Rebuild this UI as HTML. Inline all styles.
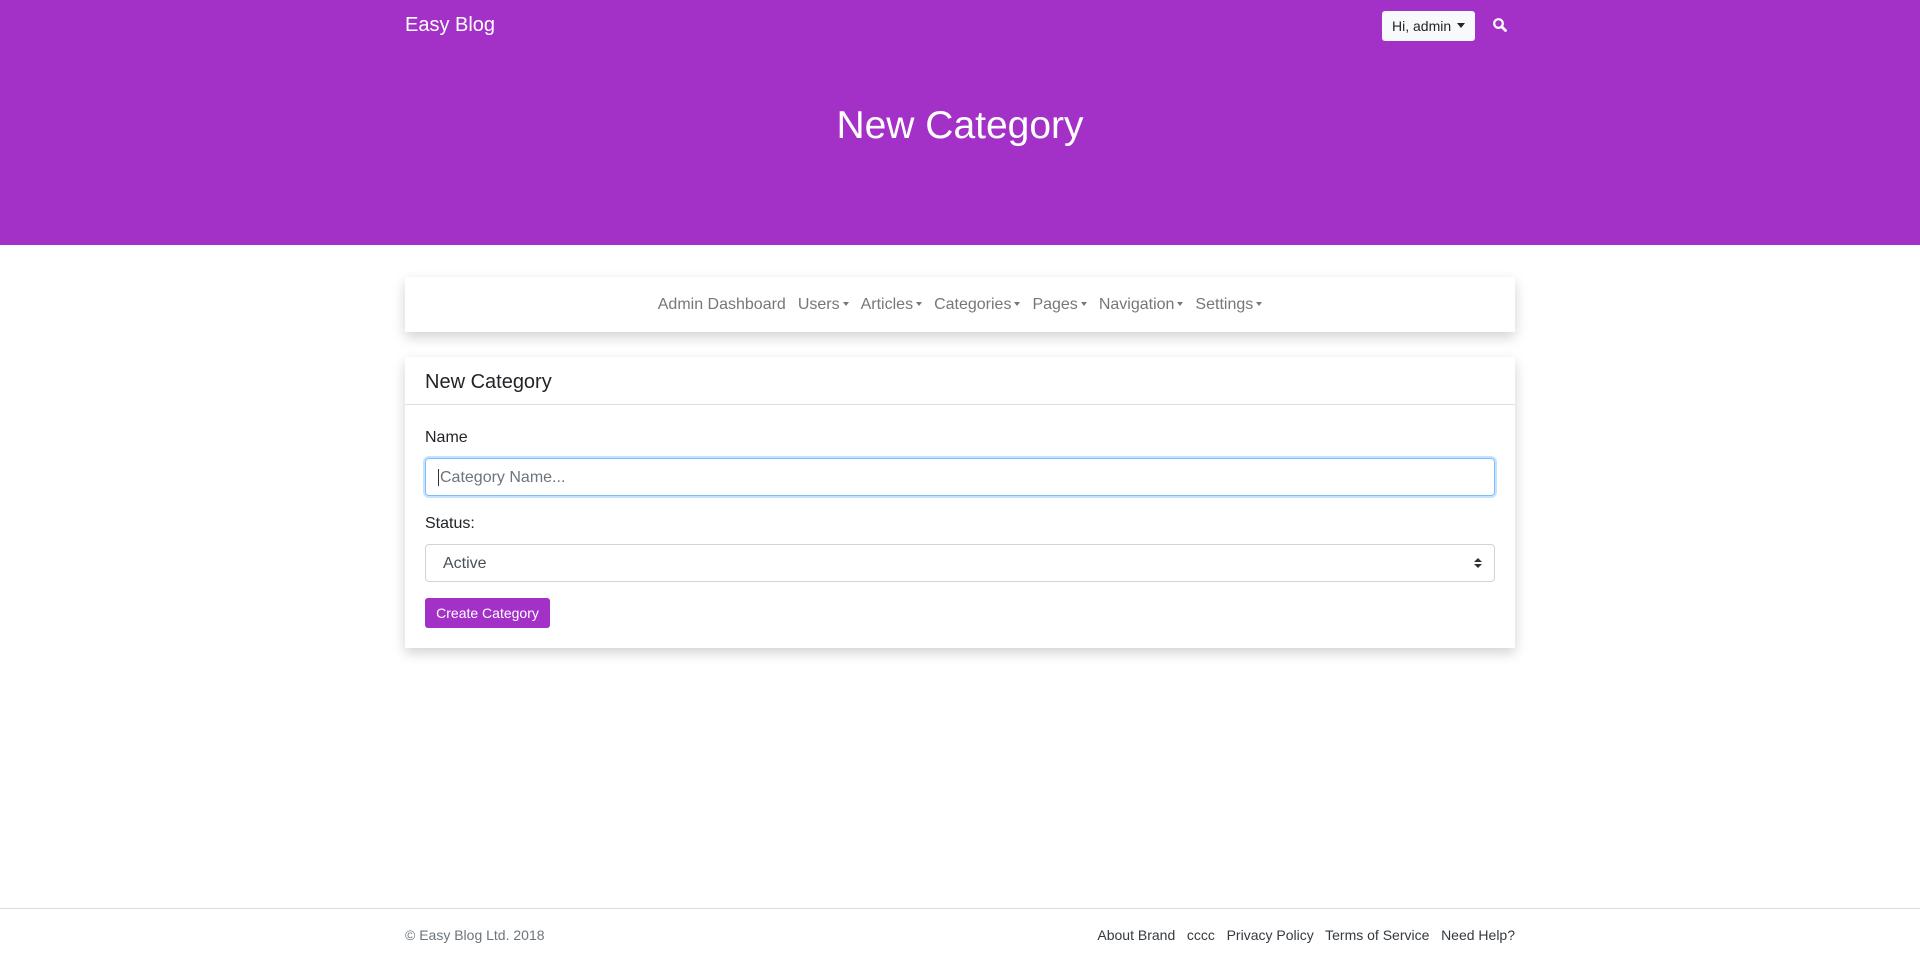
<!DOCTYPE html>
<html><head><meta charset="utf-8"><style>
*{box-sizing:border-box;margin:0;padding:0}
body{width:1920px;height:963px;font-family:"Liberation Sans",sans-serif;background:#fff;color:#212529;position:relative;overflow:hidden}
.hero{position:absolute;left:0;top:0;width:1920px;height:245px;background:#a331c8}
.brand{position:absolute;left:405px;top:14px;font-size:20px;color:#fff}
.hi{position:absolute;left:1382px;top:11px;width:93px;height:30px;background:#f8f9fa;border-radius:3px;font-size:14px;color:#212529;line-height:30px;padding-left:10px}
.hi:after{content:"";position:absolute;right:10px;top:12px;border-left:4px solid transparent;border-right:4px solid transparent;border-top:5px solid #212529}
.search{position:absolute;left:1492px;top:17px}
h1{position:absolute;left:0;width:1920px;top:104px;text-align:center;font-weight:normal;font-size:39px;color:#fff}
.card{position:absolute;left:405px;width:1110px;background:#fff;box-shadow:0 5px 12px rgba(0,0,0,.18)}
.nav{top:277px;height:55px;text-align:center;font-size:16px;color:#777;line-height:56px}
.nav span{margin:0 6px}
.c{display:inline-block;width:0;height:0;border-left:3.5px solid transparent;border-right:3.5px solid transparent;border-top:4.5px solid #777;vertical-align:3px;margin-left:3px}
.form{top:357px;height:291px}
.fh{height:48px;border-bottom:1px solid #dfdfdf;font-size:20px;line-height:50px;padding-left:20px}
.lbl{position:absolute;left:20px;font-size:16px}
.inp{position:absolute;left:20px;width:1070px;height:38px;border-radius:4px;font-size:16px;line-height:37px;padding-left:14px}
.btn{position:absolute;left:20px;top:241px;width:125px;height:30px;background:#a331c8;color:#fff;font-size:14px;line-height:30px;text-align:center;border-radius:3px}
.foot{position:absolute;top:908px;left:0;width:1920px;border-top:1px solid #dcdcdc}
.ft{position:absolute;top:927px;font-size:14px}
</style></head><body>
<div class="hero"></div>
<div class="brand">Easy Blog</div>
<div class="hi">Hi, admin</div>
<svg class="search" width="16" height="16" viewBox="0 0 16 16"><circle cx="6.5" cy="6.5" r="4.3" fill="none" stroke="#fff" stroke-width="2.2"/><path d="M9.6 9.6 L13.5 13.5" stroke="#fff" stroke-width="2.8" stroke-linecap="round"/></svg>
<h1>New Category</h1>
<div class="card nav"><span>Admin Dashboard</span><span>Users<i class="c"></i></span><span>Articles<i class="c"></i></span><span>Categories<i class="c"></i></span><span>Pages<i class="c"></i></span><span>Navigation<i class="c"></i></span><span>Settings<i class="c"></i></span></div>
<div class="card form">
<div class="fh">New Category</div>
<div class="lbl" style="top:72px">Name</div>
<div class="inp" style="top:101px;border:1px solid #80bdff;box-shadow:0 0 0 2px rgba(0,123,255,.22);color:#6c757d;padding-left:12px"><span style="border-left:1px solid #333;padding-left:1px">Category Name...</span></div>
<div class="lbl" style="top:158px">Status:</div>
<div class="inp" style="top:187px;border:1px solid #ced4da;color:#495057;padding-left:17px">Active<svg style="position:absolute;right:12px;top:12px" width="8" height="12" viewBox="0 0 8 12"><path d="M0 5 L4 1 L8 5Z M0 7 L4 11 L8 7Z" fill="#333"/></svg></div>
<div class="btn">Create Category</div>
</div>
<div class="foot"></div>
<div class="ft" style="left:405px;color:#6c757d">© Easy Blog Ltd. 2018</div>
<div class="ft" style="right:405px;color:#343a40"><span>About Brand</span>&nbsp;&nbsp; <span>cccc</span>&nbsp;&nbsp; <span>Privacy Policy</span>&nbsp;&nbsp; <span>Terms of Service</span>&nbsp;&nbsp; <span>Need Help?</span></div>
</body></html>
